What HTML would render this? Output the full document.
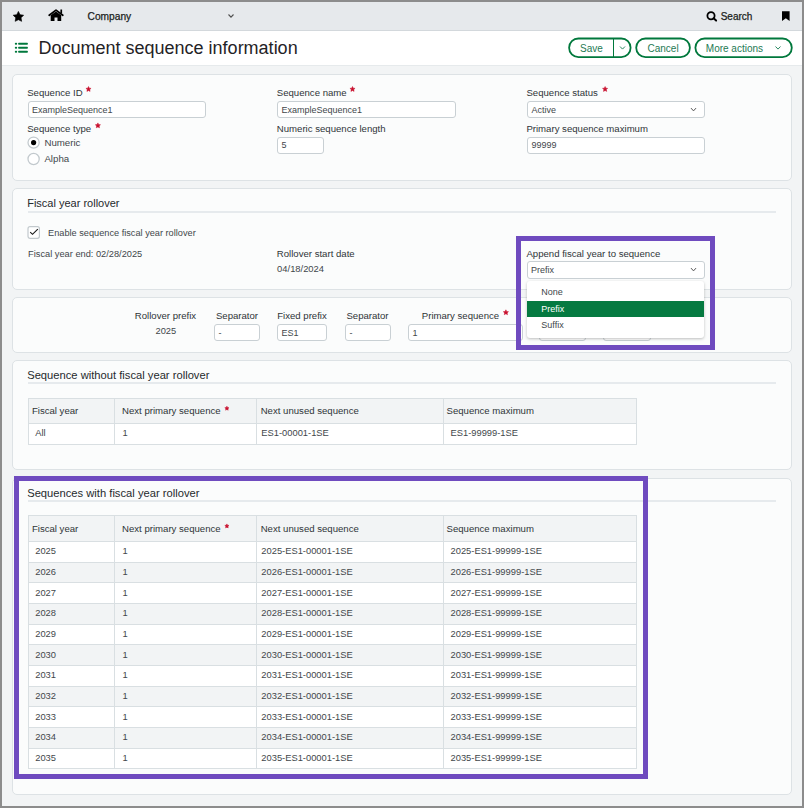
<!DOCTYPE html>
<html><head><meta charset="utf-8"><style>
html,body{margin:0;padding:0;}
body{width:804px;height:808px;position:relative;overflow:hidden;background:#8c8c8c;font-family:"Liberation Sans",sans-serif;}
.t{position:absolute;white-space:nowrap;line-height:1;}
</style></head><body>
<div style="position:absolute;left:2px;top:2px;width:800px;height:29px;box-sizing:border-box;background:#e6e9ec;border-bottom:1px solid #d3d8dc"></div>
<svg style="position:absolute;left:12px;top:10px" width="13" height="13" viewBox="0 0 13 13"><path d="M6.40 1.40 L8.05 4.63 L11.63 5.20 L9.06 7.77 L9.63 11.35 L6.40 9.70 L3.17 11.35 L3.74 7.77 L1.17 5.20 L4.75 4.63 Z" fill="#000" stroke="#000" stroke-width="0.6" stroke-linejoin="round"/></svg>
<svg style="position:absolute;left:47px;top:8px" width="18" height="14" viewBox="0 0 18 14"><path d="M2.2 7.2 L9 2.1 L15.8 7.2" fill="none" stroke="#000" stroke-width="1.8" stroke-linecap="round" stroke-linejoin="round"/><rect x="13.4" y="1.5" width="1.7" height="4" fill="#000"/><path d="M3.7 7.3 L9 3.5 L14.2 7.3 L14.2 13 L10.5 13 L10.5 9.6 L7.5 9.6 L7.5 13 L3.7 13 Z" fill="#000"/></svg>
<div class="t" style="left:87.60px;top:12.00px;font-size:10.2px;color:#1a1d20;font-weight:400;-webkit-text-stroke:0.25px #1a1d20;">Company</div>
<svg style="position:absolute;left:226px;top:12px" width="10" height="8"><path d="M2.50 2.50 L5.00 5.10 L7.50 2.50" fill="none" stroke="#505050" stroke-width="1.1"/></svg>
<svg style="position:absolute;left:705px;top:10px" width="14" height="13" viewBox="0 0 14 13"><circle cx="6" cy="5.7" r="3.6" fill="none" stroke="#000" stroke-width="1.8"/><path d="M8.6 8.3 L11.1 10.6" stroke="#000" stroke-width="2" stroke-linecap="round"/></svg>
<div class="t" style="left:720.70px;top:12.00px;font-size:10px;color:#1a1d20;font-weight:400;-webkit-text-stroke:0.25px #1a1d20;">Search</div>
<svg style="position:absolute;left:781px;top:11px" width="10" height="11" viewBox="0 0 10 11"><path d="M1 0.2 L8.6 0.2 L8.6 9.9 L4.8 7.3 L1 9.9 Z" fill="#000"/></svg>
<div style="position:absolute;left:2px;top:31px;width:800px;height:34px;box-sizing:border-box;background:#fff"></div>
<svg style="position:absolute;left:14px;top:42px" width="15" height="12" viewBox="0 0 15 12"><g fill="#00783c"><rect x="0.8" y="0.7" width="2.4" height="2" rx="1"/><rect x="0.8" y="4.7" width="2.4" height="2" rx="1"/><rect x="0.8" y="8.7" width="2.4" height="2" rx="1"/><rect x="4.1" y="0.7" width="9.8" height="2" rx="0.8"/><rect x="4.1" y="4.7" width="9.8" height="2" rx="0.8"/><rect x="4.1" y="8.7" width="9.8" height="2" rx="0.8"/></g></svg>
<div class="t" style="left:38.50px;top:39.00px;font-size:18px;color:#1f2326;font-weight:400;">Document sequence information</div>
<svg style="position:absolute;left:567px;top:36px" width="67" height="24"><rect x="2.10" y="2.50" width="61.50" height="18.60" rx="9.30" fill="#fff" stroke="#00783c" stroke-width="1.8"/></svg>
<div style="position:absolute;left:613px;top:38px;width:1.3px;height:19.5px;box-sizing:border-box;background:#00783c"></div>
<div class="t" style="left:580.00px;top:44.00px;font-size:10px;color:#1e7a54;font-weight:400;">Save</div>
<svg style="position:absolute;left:618px;top:44px" width="10" height="8"><path d="M2.00 2.50 L4.50 5.10 L7.00 2.50" fill="none" stroke="#2a8a62" stroke-width="1"/></svg>
<svg style="position:absolute;left:634px;top:36px" width="59" height="24"><rect x="2.20" y="2.50" width="53.70" height="18.60" rx="9.30" fill="#fff" stroke="#00783c" stroke-width="1.8"/></svg>
<div class="t" style="left:647.50px;top:44.00px;font-size:10px;color:#1e7a54;font-weight:400;">Cancel</div>
<svg style="position:absolute;left:693px;top:36px" width="102" height="24"><rect x="2.40" y="2.50" width="96.40" height="18.60" rx="9.30" fill="#fff" stroke="#00783c" stroke-width="1.8"/></svg>
<div class="t" style="left:705.80px;top:44.00px;font-size:10px;color:#1e7a54;font-weight:400;">More actions</div>
<svg style="position:absolute;left:773px;top:44px" width="10" height="8"><path d="M2.50 2.50 L5.00 5.10 L7.50 2.50" fill="none" stroke="#2a8a62" stroke-width="1"/></svg>
<div style="position:absolute;left:2px;top:65px;width:800px;height:741px;box-sizing:border-box;background:#f2f4f5;border-top:1px solid #e6eaec"></div>
<div style="position:absolute;left:12px;top:74px;width:780px;height:107px;box-sizing:border-box;background:#fbfcfc;border:1px solid #dde2e5;border-radius:5px"></div>
<div class="t" style="left:27.20px;top:88.00px;font-size:9.6px;color:#2f3438;font-weight:400;">Sequence ID</div>
<svg style="position:absolute;left:83px;top:84px" width="10" height="10"><path d="M5.50 2.50 L6.26 4.15 L8.07 4.37 L6.73 5.60 L7.09 7.38 L5.50 6.50 L3.91 7.38 L4.27 5.60 L2.93 4.37 L4.74 4.15 Z" fill="#c8102e" stroke="#c8102e" stroke-width="0.5" stroke-linejoin="round"/></svg>
<div class="t" style="left:276.80px;top:88.00px;font-size:9.6px;color:#2f3438;font-weight:400;">Sequence name</div>
<svg style="position:absolute;left:347px;top:84px" width="10" height="10"><path d="M5.50 2.50 L6.26 4.15 L8.07 4.37 L6.73 5.60 L7.09 7.38 L5.50 6.50 L3.91 7.38 L4.27 5.60 L2.93 4.37 L4.74 4.15 Z" fill="#c8102e" stroke="#c8102e" stroke-width="0.5" stroke-linejoin="round"/></svg>
<div class="t" style="left:526.40px;top:88.00px;font-size:9.6px;color:#2f3438;font-weight:400;">Sequence status</div>
<svg style="position:absolute;left:600px;top:84px" width="10" height="10"><path d="M5.10 2.50 L5.86 4.15 L7.67 4.37 L6.33 5.60 L6.69 7.38 L5.10 6.50 L3.51 7.38 L3.87 5.60 L2.53 4.37 L4.34 4.15 Z" fill="#c8102e" stroke="#c8102e" stroke-width="0.5" stroke-linejoin="round"/></svg>
<div style="position:absolute;left:27.5px;top:101px;width:178.5px;height:17px;box-sizing:border-box;background:#fff;border:1px solid #c9d0d4;border-radius:3px"></div>
<div class="t" style="left:32.00px;top:106.00px;font-size:9px;color:#42474b;font-weight:400;">ExampleSequence1</div>
<div style="position:absolute;left:277px;top:101px;width:179px;height:17px;box-sizing:border-box;background:#fff;border:1px solid #c9d0d4;border-radius:3px"></div>
<div class="t" style="left:281.50px;top:106.00px;font-size:9px;color:#42474b;font-weight:400;">ExampleSequence1</div>
<div style="position:absolute;left:527px;top:101px;width:178px;height:17px;box-sizing:border-box;background:#fff;border:1px solid #c9d0d4;border-radius:3px"></div>
<div class="t" style="left:531.50px;top:106.00px;font-size:9px;color:#42474b;font-weight:400;">Active</div>
<svg style="position:absolute;left:689px;top:106px" width="10" height="8"><path d="M2.00 2.10 L4.50 4.90 L7.00 2.10" fill="none" stroke="#555" stroke-width="1"/></svg>
<div class="t" style="left:27.20px;top:124.00px;font-size:9.6px;color:#2f3438;font-weight:400;">Sequence type</div>
<svg style="position:absolute;left:92px;top:120px" width="10" height="10"><path d="M5.90 2.90 L6.66 4.55 L8.47 4.77 L7.13 6.00 L7.49 7.78 L5.90 6.90 L4.31 7.78 L4.67 6.00 L3.33 4.77 L5.14 4.55 Z" fill="#c8102e" stroke="#c8102e" stroke-width="0.5" stroke-linejoin="round"/></svg>
<div class="t" style="left:276.80px;top:124.00px;font-size:9.6px;color:#2f3438;font-weight:400;">Numeric sequence length</div>
<div class="t" style="left:526.40px;top:124.00px;font-size:9.6px;color:#2f3438;font-weight:400;">Primary sequence maximum</div>
<div style="position:absolute;left:277px;top:137px;width:46.5px;height:17px;box-sizing:border-box;background:#fff;border:1px solid #c9d0d4;border-radius:3px"></div>
<div class="t" style="left:281.50px;top:141.00px;font-size:9px;color:#42474b;font-weight:400;">5</div>
<div style="position:absolute;left:527px;top:137px;width:178px;height:17px;box-sizing:border-box;background:#fff;border:1px solid #c9d0d4;border-radius:3px"></div>
<div class="t" style="left:531.50px;top:141.00px;font-size:9px;color:#42474b;font-weight:400;">99999</div>
<svg style="position:absolute;left:26px;top:135px" width="16" height="32"><circle cx="7.6" cy="7.6" r="5.6" fill="#fff" stroke="#c2c9cd" stroke-width="1.25"/><circle cx="7.6" cy="7.6" r="2.6" fill="#000"/><circle cx="7.6" cy="24" r="5.6" fill="#fff" stroke="#c2c9cd" stroke-width="1.25"/></svg>
<div class="t" style="left:44.40px;top:138.00px;font-size:9.7px;color:#42474b;font-weight:400;">Numeric</div>
<div class="t" style="left:44.40px;top:154.00px;font-size:9.7px;color:#42474b;font-weight:400;">Alpha</div>
<div style="position:absolute;left:12px;top:188px;width:780px;height:102px;box-sizing:border-box;background:#fbfcfc;border:1px solid #dde2e5;border-radius:5px"></div>
<div class="t" style="left:27.20px;top:198.00px;font-size:11px;color:#262a2d;font-weight:400;">Fiscal year rollover</div>
<div style="position:absolute;left:28px;top:211px;width:748px;height:2px;box-sizing:border-box;background:#e6eaed"></div>
<svg style="position:absolute;left:26px;top:225px" width="16" height="16"><rect x="2" y="1.7" width="11.4" height="11.6" rx="2" fill="#fff" stroke="#c2c9cd" stroke-width="1.2"/><path d="M4.2 7.2 L6.5 9.3 L11.8 4.1" fill="none" stroke="#1a1a1a" stroke-width="1.15"/></svg>
<div class="t" style="left:48.10px;top:229.00px;font-size:9.2px;color:#42474b;font-weight:400;">Enable sequence fiscal year rollover</div>
<div class="t" style="left:28.10px;top:250.00px;font-size:9.25px;color:#42474b;font-weight:400;">Fiscal year end: 02/28/2025</div>
<div class="t" style="left:276.80px;top:249.00px;font-size:9.6px;color:#2f3438;font-weight:400;">Rollover start date</div>
<div class="t" style="left:277.10px;top:264.00px;font-size:9.4px;color:#42474b;font-weight:400;">04/18/2024</div>
<div class="t" style="left:526.40px;top:249.00px;font-size:9.6px;color:#2f3438;font-weight:400;">Append fiscal year to sequence</div>
<div style="position:absolute;left:527px;top:261.3px;width:178px;height:17.69999999999999px;box-sizing:border-box;background:#fff;border:1px solid #c9d0d4;border-radius:3px"></div>
<div class="t" style="left:531.00px;top:266.00px;font-size:9px;color:#42474b;font-weight:400;">Prefix</div>
<svg style="position:absolute;left:689px;top:266px" width="10" height="8"><path d="M2.00 2.10 L4.50 4.90 L7.00 2.10" fill="none" stroke="#555" stroke-width="1"/></svg>
<div style="position:absolute;left:12px;top:297px;width:780px;height:56px;box-sizing:border-box;background:#fbfcfc;border:1px solid #dde2e5;border-radius:5px"></div>
<div class="t" style="left:134.80px;top:311.00px;font-size:9.6px;color:#2f3438;font-weight:400;">Rollover prefix</div>
<div class="t" style="left:155.50px;top:327.00px;font-size:9.3px;color:#42474b;font-weight:400;">2025</div>
<div class="t" style="left:215.90px;top:311.00px;font-size:9.6px;color:#2f3438;font-weight:400;">Separator</div>
<div style="position:absolute;left:214px;top:324.4px;width:46px;height:16.600000000000023px;box-sizing:border-box;background:#fff;border:1px solid #c9d0d4;border-radius:3px"></div>
<div class="t" style="left:218.50px;top:329.00px;font-size:9px;color:#42474b;font-weight:400;">-</div>
<div class="t" style="left:277.20px;top:311.00px;font-size:9.6px;color:#2f3438;font-weight:400;">Fixed prefix</div>
<div style="position:absolute;left:277.2px;top:324.4px;width:50.30000000000001px;height:16.600000000000023px;box-sizing:border-box;background:#fff;border:1px solid #c9d0d4;border-radius:3px"></div>
<div class="t" style="left:281.50px;top:329.00px;font-size:9px;color:#42474b;font-weight:400;">ES1</div>
<div class="t" style="left:346.40px;top:311.00px;font-size:9.6px;color:#2f3438;font-weight:400;">Separator</div>
<div style="position:absolute;left:345.2px;top:324.4px;width:45.400000000000034px;height:16.600000000000023px;box-sizing:border-box;background:#fff;border:1px solid #c9d0d4;border-radius:3px"></div>
<div class="t" style="left:349.50px;top:329.00px;font-size:9px;color:#42474b;font-weight:400;">-</div>
<div class="t" style="left:421.80px;top:311.00px;font-size:9.6px;color:#2f3438;font-weight:400;">Primary sequence</div>
<svg style="position:absolute;left:500px;top:307px" width="10" height="10"><path d="M5.90 2.80 L6.66 4.45 L8.47 4.67 L7.13 5.90 L7.49 7.68 L5.90 6.80 L4.31 7.68 L4.67 5.90 L3.33 4.67 L5.14 4.45 Z" fill="#c8102e" stroke="#c8102e" stroke-width="0.5" stroke-linejoin="round"/></svg>
<div style="position:absolute;left:408.4px;top:324.4px;width:115.10000000000002px;height:16.600000000000023px;box-sizing:border-box;background:#fff;border:1px solid #c9d0d4;border-radius:3px"></div>
<div class="t" style="left:412.50px;top:329.00px;font-size:9px;color:#42474b;font-weight:400;">1</div>
<div style="position:absolute;left:539px;top:324.4px;width:47px;height:16.600000000000023px;box-sizing:border-box;background:#fff;border:1px solid #c9d0d4;border-radius:3px"></div>
<div style="position:absolute;left:603px;top:324.4px;width:48px;height:16.600000000000023px;box-sizing:border-box;background:#fff;border:1px solid #c9d0d4;border-radius:3px"></div>
<div style="position:absolute;left:12px;top:360px;width:780px;height:110px;box-sizing:border-box;background:#fbfcfc;border:1px solid #dde2e5;border-radius:5px"></div>
<div class="t" style="left:27.20px;top:370.00px;font-size:11.2px;color:#262a2d;font-weight:400;">Sequence without fiscal year rollover</div>
<div style="position:absolute;left:28px;top:382px;width:748px;height:2px;box-sizing:border-box;background:#e6eaed"></div>
<div style="position:absolute;left:28px;top:398px;width:609px;height:47px;box-sizing:border-box;background:#fff;border:1px solid #d9dfe2"></div>
<div style="position:absolute;left:29px;top:399px;width:607px;height:24px;box-sizing:border-box;background:#f2f4f5"></div>
<div style="position:absolute;left:28px;top:423px;width:609px;height:1px;box-sizing:border-box;background:#d9dfe2"></div>
<div style="position:absolute;left:114.4px;top:398px;width:1px;height:46px;box-sizing:border-box;background:#d9dfe2"></div>
<div style="position:absolute;left:256.3px;top:398px;width:1px;height:46px;box-sizing:border-box;background:#d9dfe2"></div>
<div style="position:absolute;left:443px;top:398px;width:1px;height:46px;box-sizing:border-box;background:#d9dfe2"></div>
<div class="t" style="left:31.90px;top:406.00px;font-size:9.6px;color:#2f3438;font-weight:400;">Fiscal year</div>
<div class="t" style="left:122.00px;top:406.00px;font-size:9.6px;color:#2f3438;font-weight:400;">Next primary sequence</div>
<svg style="position:absolute;left:221px;top:403px" width="10" height="10"><path d="M5.90 3.20 L6.52 4.55 L7.99 4.72 L6.90 5.73 L7.19 7.18 L5.90 6.46 L4.61 7.18 L4.90 5.73 L3.81 4.72 L5.28 4.55 Z" fill="#c8102e" stroke="#c8102e" stroke-width="0.5" stroke-linejoin="round"/></svg>
<div class="t" style="left:260.70px;top:406.00px;font-size:9.6px;color:#2f3438;font-weight:400;">Next unused sequence</div>
<div class="t" style="left:446.50px;top:406.00px;font-size:9.6px;color:#2f3438;font-weight:400;">Sequence maximum</div>
<div class="t" style="left:35.20px;top:429.00px;font-size:9.35px;color:#42474b;font-weight:400;">All</div>
<div class="t" style="left:122.50px;top:429.00px;font-size:9.35px;color:#42474b;font-weight:400;">1</div>
<div class="t" style="left:261.30px;top:429.00px;font-size:9.35px;color:#42474b;font-weight:400;">ES1-00001-1SE</div>
<div class="t" style="left:450.50px;top:429.00px;font-size:9.35px;color:#42474b;font-weight:400;">ES1-99999-1SE</div>
<div style="position:absolute;left:12px;top:477.5px;width:780px;height:317.5px;box-sizing:border-box;background:#fbfcfc;border:1px solid #dde2e5;border-radius:5px"></div>
<div class="t" style="left:27.20px;top:488.00px;font-size:11.2px;color:#262a2d;font-weight:400;">Sequences with fiscal year rollover</div>
<div style="position:absolute;left:28px;top:500px;width:748px;height:2px;box-sizing:border-box;background:#e6eaed"></div>
<div style="position:absolute;left:28px;top:515.3px;width:609px;height:254.06px;box-sizing:border-box;background:#fff;border:1px solid #d9dfe2"></div>
<div style="position:absolute;left:29px;top:516.3px;width:607px;height:24.8px;box-sizing:border-box;background:#f2f4f5"></div>
<div style="position:absolute;left:28px;top:541.0999999999999px;width:609px;height:1px;box-sizing:border-box;background:#d9dfe2"></div>
<div style="position:absolute;left:29px;top:562.7599999999999px;width:607px;height:19.66px;box-sizing:border-box;background:#f2f4f5"></div>
<div style="position:absolute;left:28px;top:561.7599999999999px;width:609px;height:1px;box-sizing:border-box;background:#d9dfe2"></div>
<div style="position:absolute;left:28px;top:582.42px;width:609px;height:1px;box-sizing:border-box;background:#d9dfe2"></div>
<div style="position:absolute;left:29px;top:604.0799999999999px;width:607px;height:19.66px;box-sizing:border-box;background:#f2f4f5"></div>
<div style="position:absolute;left:28px;top:603.0799999999999px;width:609px;height:1px;box-sizing:border-box;background:#d9dfe2"></div>
<div style="position:absolute;left:28px;top:623.7399999999999px;width:609px;height:1px;box-sizing:border-box;background:#d9dfe2"></div>
<div style="position:absolute;left:29px;top:645.3999999999999px;width:607px;height:19.66px;box-sizing:border-box;background:#f2f4f5"></div>
<div style="position:absolute;left:28px;top:644.3999999999999px;width:609px;height:1px;box-sizing:border-box;background:#d9dfe2"></div>
<div style="position:absolute;left:28px;top:665.06px;width:609px;height:1px;box-sizing:border-box;background:#d9dfe2"></div>
<div style="position:absolute;left:29px;top:686.7199999999999px;width:607px;height:19.66px;box-sizing:border-box;background:#f2f4f5"></div>
<div style="position:absolute;left:28px;top:685.7199999999999px;width:609px;height:1px;box-sizing:border-box;background:#d9dfe2"></div>
<div style="position:absolute;left:28px;top:706.3799999999999px;width:609px;height:1px;box-sizing:border-box;background:#d9dfe2"></div>
<div style="position:absolute;left:29px;top:728.04px;width:607px;height:19.66px;box-sizing:border-box;background:#f2f4f5"></div>
<div style="position:absolute;left:28px;top:727.04px;width:609px;height:1px;box-sizing:border-box;background:#d9dfe2"></div>
<div style="position:absolute;left:28px;top:747.6999999999999px;width:609px;height:1px;box-sizing:border-box;background:#d9dfe2"></div>
<div style="position:absolute;left:114.4px;top:515.3px;width:1px;height:253.06px;box-sizing:border-box;background:#d9dfe2"></div>
<div style="position:absolute;left:256.3px;top:515.3px;width:1px;height:253.06px;box-sizing:border-box;background:#d9dfe2"></div>
<div style="position:absolute;left:443px;top:515.3px;width:1px;height:253.06px;box-sizing:border-box;background:#d9dfe2"></div>
<div class="t" style="left:31.90px;top:524.00px;font-size:9.6px;color:#2f3438;font-weight:400;">Fiscal year</div>
<div class="t" style="left:122.00px;top:524.00px;font-size:9.6px;color:#2f3438;font-weight:400;">Next primary sequence</div>
<svg style="position:absolute;left:221px;top:521px" width="10" height="10"><path d="M5.90 2.90 L6.52 4.25 L7.99 4.42 L6.90 5.43 L7.19 6.88 L5.90 6.16 L4.61 6.88 L4.90 5.43 L3.81 4.42 L5.28 4.25 Z" fill="#c8102e" stroke="#c8102e" stroke-width="0.5" stroke-linejoin="round"/></svg>
<div class="t" style="left:260.70px;top:524.00px;font-size:9.6px;color:#2f3438;font-weight:400;">Next unused sequence</div>
<div class="t" style="left:446.50px;top:524.00px;font-size:9.6px;color:#2f3438;font-weight:400;">Sequence maximum</div>
<div class="t" style="left:35.20px;top:547.00px;font-size:9.35px;color:#42474b;font-weight:400;">2025</div>
<div class="t" style="left:122.50px;top:547.00px;font-size:9.35px;color:#42474b;font-weight:400;">1</div>
<div class="t" style="left:261.30px;top:547.00px;font-size:9.35px;color:#42474b;font-weight:400;">2025-ES1-00001-1SE</div>
<div class="t" style="left:450.50px;top:547.00px;font-size:9.35px;color:#42474b;font-weight:400;">2025-ES1-99999-1SE</div>
<div class="t" style="left:35.20px;top:568.00px;font-size:9.35px;color:#42474b;font-weight:400;">2026</div>
<div class="t" style="left:122.50px;top:568.00px;font-size:9.35px;color:#42474b;font-weight:400;">1</div>
<div class="t" style="left:261.30px;top:568.00px;font-size:9.35px;color:#42474b;font-weight:400;">2026-ES1-00001-1SE</div>
<div class="t" style="left:450.50px;top:568.00px;font-size:9.35px;color:#42474b;font-weight:400;">2026-ES1-99999-1SE</div>
<div class="t" style="left:35.20px;top:589.00px;font-size:9.35px;color:#42474b;font-weight:400;">2027</div>
<div class="t" style="left:122.50px;top:589.00px;font-size:9.35px;color:#42474b;font-weight:400;">1</div>
<div class="t" style="left:261.30px;top:589.00px;font-size:9.35px;color:#42474b;font-weight:400;">2027-ES1-00001-1SE</div>
<div class="t" style="left:450.50px;top:589.00px;font-size:9.35px;color:#42474b;font-weight:400;">2027-ES1-99999-1SE</div>
<div class="t" style="left:35.20px;top:609.00px;font-size:9.35px;color:#42474b;font-weight:400;">2028</div>
<div class="t" style="left:122.50px;top:609.00px;font-size:9.35px;color:#42474b;font-weight:400;">1</div>
<div class="t" style="left:261.30px;top:609.00px;font-size:9.35px;color:#42474b;font-weight:400;">2028-ES1-00001-1SE</div>
<div class="t" style="left:450.50px;top:609.00px;font-size:9.35px;color:#42474b;font-weight:400;">2028-ES1-99999-1SE</div>
<div class="t" style="left:35.20px;top:630.00px;font-size:9.35px;color:#42474b;font-weight:400;">2029</div>
<div class="t" style="left:122.50px;top:630.00px;font-size:9.35px;color:#42474b;font-weight:400;">1</div>
<div class="t" style="left:261.30px;top:630.00px;font-size:9.35px;color:#42474b;font-weight:400;">2029-ES1-00001-1SE</div>
<div class="t" style="left:450.50px;top:630.00px;font-size:9.35px;color:#42474b;font-weight:400;">2029-ES1-99999-1SE</div>
<div class="t" style="left:35.20px;top:651.00px;font-size:9.35px;color:#42474b;font-weight:400;">2030</div>
<div class="t" style="left:122.50px;top:651.00px;font-size:9.35px;color:#42474b;font-weight:400;">1</div>
<div class="t" style="left:261.30px;top:651.00px;font-size:9.35px;color:#42474b;font-weight:400;">2030-ES1-00001-1SE</div>
<div class="t" style="left:450.50px;top:651.00px;font-size:9.35px;color:#42474b;font-weight:400;">2030-ES1-99999-1SE</div>
<div class="t" style="left:35.20px;top:671.00px;font-size:9.35px;color:#42474b;font-weight:400;">2031</div>
<div class="t" style="left:122.50px;top:671.00px;font-size:9.35px;color:#42474b;font-weight:400;">1</div>
<div class="t" style="left:261.30px;top:671.00px;font-size:9.35px;color:#42474b;font-weight:400;">2031-ES1-00001-1SE</div>
<div class="t" style="left:450.50px;top:671.00px;font-size:9.35px;color:#42474b;font-weight:400;">2031-ES1-99999-1SE</div>
<div class="t" style="left:35.20px;top:692.00px;font-size:9.35px;color:#42474b;font-weight:400;">2032</div>
<div class="t" style="left:122.50px;top:692.00px;font-size:9.35px;color:#42474b;font-weight:400;">1</div>
<div class="t" style="left:261.30px;top:692.00px;font-size:9.35px;color:#42474b;font-weight:400;">2032-ES1-00001-1SE</div>
<div class="t" style="left:450.50px;top:692.00px;font-size:9.35px;color:#42474b;font-weight:400;">2032-ES1-99999-1SE</div>
<div class="t" style="left:35.20px;top:713.00px;font-size:9.35px;color:#42474b;font-weight:400;">2033</div>
<div class="t" style="left:122.50px;top:713.00px;font-size:9.35px;color:#42474b;font-weight:400;">1</div>
<div class="t" style="left:261.30px;top:713.00px;font-size:9.35px;color:#42474b;font-weight:400;">2033-ES1-00001-1SE</div>
<div class="t" style="left:450.50px;top:713.00px;font-size:9.35px;color:#42474b;font-weight:400;">2033-ES1-99999-1SE</div>
<div class="t" style="left:35.20px;top:733.00px;font-size:9.35px;color:#42474b;font-weight:400;">2034</div>
<div class="t" style="left:122.50px;top:733.00px;font-size:9.35px;color:#42474b;font-weight:400;">1</div>
<div class="t" style="left:261.30px;top:733.00px;font-size:9.35px;color:#42474b;font-weight:400;">2034-ES1-00001-1SE</div>
<div class="t" style="left:450.50px;top:733.00px;font-size:9.35px;color:#42474b;font-weight:400;">2034-ES1-99999-1SE</div>
<div class="t" style="left:35.20px;top:754.00px;font-size:9.35px;color:#42474b;font-weight:400;">2035</div>
<div class="t" style="left:122.50px;top:754.00px;font-size:9.35px;color:#42474b;font-weight:400;">1</div>
<div class="t" style="left:261.30px;top:754.00px;font-size:9.35px;color:#42474b;font-weight:400;">2035-ES1-00001-1SE</div>
<div class="t" style="left:450.50px;top:754.00px;font-size:9.35px;color:#42474b;font-weight:400;">2035-ES1-99999-1SE</div>
<div style="position:absolute;left:14.2px;top:476px;width:634px;height:303px;box-sizing:border-box;border:5px solid #6f4bbf"></div>
<div style="position:absolute;left:516.3px;top:235.7px;width:199px;height:114.5px;box-sizing:border-box;border:5px solid #6f4bbf"></div>
<div style="position:absolute;left:527px;top:280.5px;width:177px;height:57px;box-sizing:border-box;background:#fff;border-radius:3px;box-shadow:0 1px 3px rgba(0,0,0,0.25)"></div>
<div style="position:absolute;left:527px;top:300.6px;width:177px;height:16.2px;box-sizing:border-box;background:#057a41"></div>
<div class="t" style="left:541.30px;top:288.00px;font-size:9px;color:#42474b;font-weight:400;">None</div>
<div class="t" style="left:541.30px;top:305.00px;font-size:9px;color:#fff;font-weight:400;">Prefix</div>
<div class="t" style="left:541.30px;top:321.00px;font-size:9px;color:#42474b;font-weight:400;">Suffix</div>
</body></html>
